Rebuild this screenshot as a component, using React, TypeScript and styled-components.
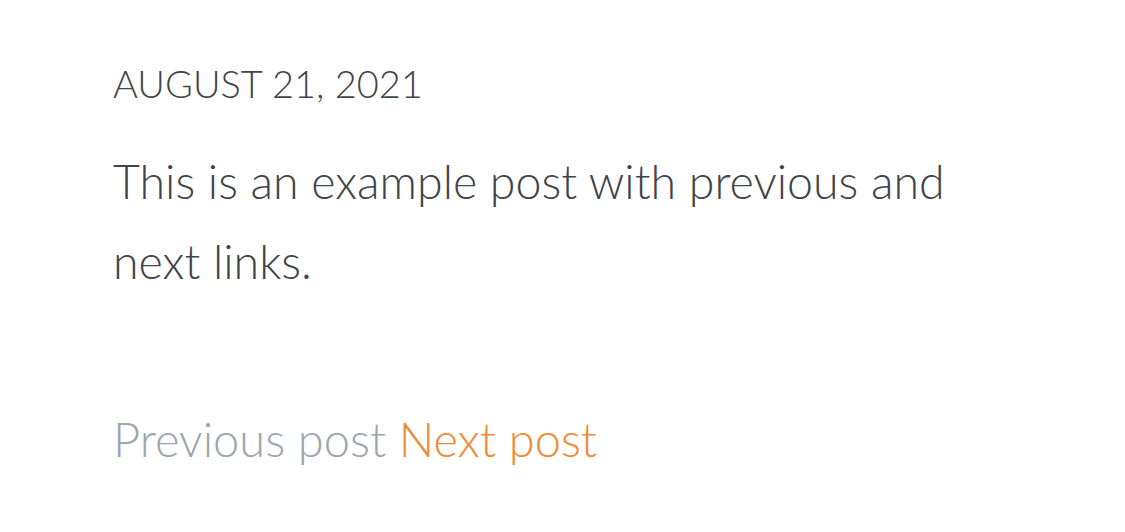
import React from "react";
import styled, { createGlobalStyle } from "styled-components";

const Global = createGlobalStyle`
  html, body { margin: 0; padding: 0; background: #ffffff; }
  body { font-family: "Lato Light", Lato, "Open Sans", sans-serif; font-weight: 300; }
`;

const Article = styled.article`
  padding: 53px 113px 0 113px;
  max-width: 860px;
  display: flex;
  flex-direction: column;
`;

const DateLine = styled.time`
  font-size: 38px;
  line-height: 60px;
  color: #3f454b;
  text-transform: uppercase;
`;

const Body = styled.p`
  margin: 28px 0 0 0;
  font-size: 46.5px;
  line-height: 80px;
  color: #3f454b;
`;

const Nav = styled.nav`
  margin-top: 108px;
  font-size: 47px;
  line-height: 60px;
`;

const NavLink = styled.a<{ $active?: boolean }>`
  color: ${(p) => (p.$active ? "#f08a35" : "#9ba6ae")};
  text-decoration: none;
`;

export default function App() {
  return (
    <>
      <Global />
      <Article>
        <DateLine>August 21, 2021</DateLine>
        <Body>This is an example post with previous and next links.</Body>
        <Nav>
          <NavLink href="#">Previous post</NavLink>{" "}
          <NavLink href="#" $active>
            Next post
          </NavLink>
        </Nav>
      </Article>
    </>
  );
}
